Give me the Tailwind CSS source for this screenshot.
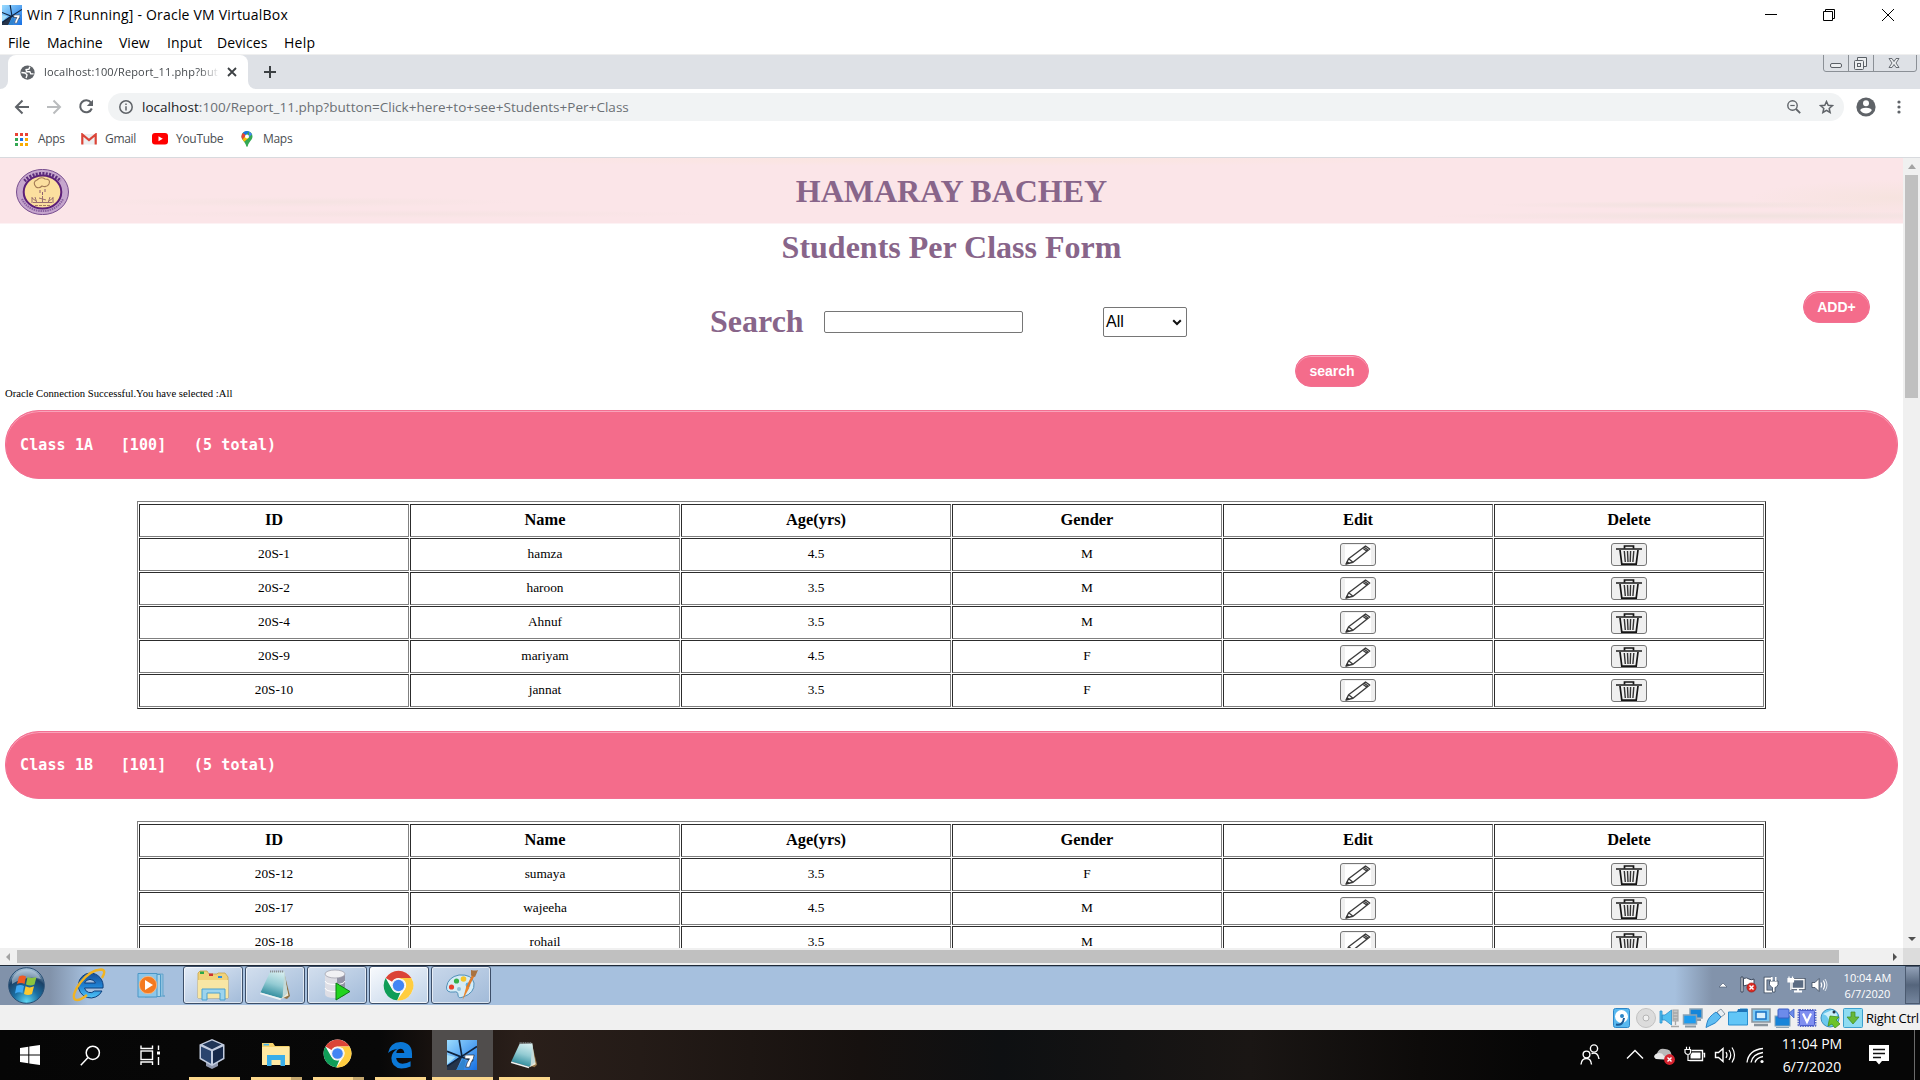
<!DOCTYPE html>
<html lang="en">
<head>
<meta charset="utf-8">
<title>Win 7 [Running] - Oracle VM VirtualBox</title>
<script src="https://cdn.jsdelivr.net/npm/@tailwindcss/browser@4"></script>
</head>
<body class="w-[1920px] h-[1080px] overflow-hidden bg-white flex flex-col font-['Open_Sans','Noto_Sans',sans-serif] text-black">

<!-- shared icon symbols -->
<svg class="absolute size-0">
  <defs>
    <linearGradient id="pad" x1=".6" y1="0" x2=".3" y2="1"><stop offset="0" stop-color="#d3ecee"/><stop offset=".45" stop-color="#93cbd3"/><stop offset=".85" stop-color="#3b93a3"/><stop offset="1" stop-color="#8fc4cc"/></linearGradient>
    <linearGradient id="glass" x1="0" y1="0" x2="1" y2="1"><stop offset="0" stop-color="#9bdcff"/><stop offset="1" stop-color="#1670e4"/></linearGradient>
  </defs>
  <symbol id="chrome" viewBox="0 0 48 48">
    <circle cx="24" cy="24" r="23" fill="#fff"/>
    <path d="M4.1 12.5 A23 23 0 0 1 43.9 12.5 H24 A11.5 11.5 0 0 0 14 18.3Z" fill="#db4437"/>
    <path d="M4.1 12.5 L14 29.7 A11.5 11.5 0 0 0 27 35 L22 47 A23 23 0 0 1 4.1 12.5Z" fill="#0f9d58"/>
    <path d="M43.9 12.5 A23 23 0 0 1 22 47 L34 29.7 A11.5 11.5 0 0 0 32 15 L24 12.5Z" fill="#ffcd40"/>
    <circle cx="24" cy="24" r="11" fill="#f1f1f1"/>
    <circle cx="24" cy="24" r="8.8" fill="#4285f4"/>
  </symbol>
  <symbol id="notepad" viewBox="0 0 32 32">
    <path d="M25 3 L31 27 L28 30 L22 28Z" fill="#8f7144"/>
    <path d="M24 3 L29.5 26.5 L22 30Z" fill="#efe9d6"/>
    <path d="M11 3 L25.5 2.5 L28 24 L22 29.500 L1.500 23.500Z" fill="url(#pad)"/>
    <path d="M25.500 2.500 L28.500 24 L23.500 29 Z" fill="#c3d9d8"/>
    <path d="M1.500 23.500 L22 29.300 L21.500 31.200 L1 25Z" fill="#eef3f4"/>
    <path d="M11 2.500 H25" stroke="#8b9294" stroke-width="2" stroke-dasharray="1.200 .8"/>
  </symbol>
  <symbol id="win7vm" viewBox="0 0 32 32">
    <rect width="32" height="32" fill="url(#glass)"/>
    <path d="M0 16 L9 18 L0 26Z" fill="#a4def9"/>
    <path d="M0 28 L13 18 L16 19 L10 32 H0Z" fill="#26344a"/>
    <path d="M10 32 L17 20 L20 22 L18 32Z" fill="#2f83cf"/>
    <path d="M13 0 L16 18 M32 7 L15 18 L0 28 M0 12 L15 18 L28 22" stroke="#10223c" stroke-width="1.800" fill="none"/>
    <path d="M19 16 H29 L28 20 Q25 24 24 29 H20 Q21 24 24 20 H19Z" fill="#fff" stroke="#28384e" stroke-width=".8"/>
  </symbol>
  <symbol id="pencil" viewBox="0 0 26 20" preserveAspectRatio="none">
    <rect x="0" y="0" width="26" height="20" fill="#fff"/>
    <path d="M1 19 L3.600 13.800 L20.500 1 L24.700 4 L8 17.200Z M3.600 13.800 L8 17.200 M17.800 3.200 L22 6.200 M19.200 2.200 L23.400 5.200" fill="none" stroke="#3c3c3c" stroke-width="1.400" stroke-linejoin="round"/>
    <path d="M.6 19.500 L2.200 16 L5 18.200Z" fill="#333"/>
  </symbol>
  <symbol id="trash" viewBox="0 0 26 20" preserveAspectRatio="none">
    <path d="M0 4 H26" stroke="#333" stroke-width="1.700"/>
    <path d="M8.500 3.500 V1 H17.500 V3.500 M4 5 L5.800 19.200 H20.200 L22 5" fill="none" stroke="#151515" stroke-width="1.700"/>
    <path d="M8.300 6 L9.300 17 M11.500 6 L12 17 M14.600 6 L14.200 17 M17.800 6 L16.900 17" stroke="#333" stroke-width="1.400"/>
  </symbol>
</svg>

<!-- host window title bar and menu -->
<div class="h-[29px] shrink-0 flex items-center pl-[2px] pr-[23px]">
  <svg class="size-5 shrink-0"><use href="#win7vm"/></svg>
  <span class="ml-[5px] text-[14px] tracking-[0.2px] whitespace-nowrap">Win 7 [Running] - Oracle VM VirtualBox</span>
  <svg class="ml-auto" width="132" height="14" fill="none" stroke="#000" stroke-width="1">
    <path d="M0 6.500 H12"/>
    <path d="M58.500 3.500 h9 v9 h-9z M60.500 3.500 V1.500 h9 v9 H67.500"/>
    <path d="M117 1 L129 13 M129 1 L117 13"/>
  </svg>
</div>
<div class="h-[25px] shrink-0 flex items-center gap-[16px] pl-[8px] pt-[2px] text-[14px] leading-5">
  <span class="w-[23px]">File</span><span class="w-[56px]">Machine</span><span class="w-[32px]">View</span><span class="w-[34px] tracking-[0.1px]">Input</span><span class="w-[51px] tracking-[0.1px]">Devices</span><span class="tracking-[0.3px]">Help</span>
</div>

<!-- browser tab strip -->
<div class="h-[35px] shrink-0 bg-[#dee1e6] border-t border-[#efefef] flex items-start">
  <div class="w-2 h-[34px] bg-white"><div class="size-full bg-[#dee1e6] rounded-br-lg"></div></div>
  <div class="w-[240px] h-[34px] bg-white rounded-t-lg flex items-center pl-[12px]">
    <svg class="size-[15px] shrink-0" viewBox="0 0 16 16"><circle cx="8" cy="8" r="7.600" fill="#5f6368"/><path d="M1.500 8 L5.500 8.500 L7.500 10.500 L6.500 14 M10.500 1.800 L9.500 4.500 L6.500 5 L7 7.200 H10.500 L11.500 9.500 L14.500 9.500" stroke="#fff" stroke-width="1.500" fill="none"/></svg>
    <span class="ml-[9px] w-[176px] whitespace-nowrap text-[11px] tracking-[0.15px] text-[#45494d] mask-r-from-88% mask-r-to-100%">localhost:100/Report_11.php?but</span>
    <svg class="ml-[7px]" width="10" height="10"><path d="M1 1 L9 9 M9 1 L1 9" stroke="#3c4043" stroke-width="1.800"/></svg>
  </div>
  <div class="w-2 h-[34px] bg-white"><div class="size-full bg-[#dee1e6] rounded-bl-lg"></div></div>
  <svg class="ml-[8px] mt-[11px]" width="12" height="12"><path d="M6 0 V12 M0 6 H12" stroke="#3c4043" stroke-width="2"/></svg>
  <svg class="ml-auto mr-[3px]" width="94" height="17" fill="none" stroke="#70757a">
    <path d="M.500 0 V14 Q.500 16.500 3 16.500 H91 Q93.500 16.500 93.500 14 V0 M25.500 0 V16 M50.500 0 V16" stroke="#8b9096"/>
    <rect x="7.500" y="8.500" width="11" height="4" rx="1.500" fill="#eceef0" stroke="#5b6066"/>
    <path d="M34.500 5 V2.500 H43.500 V11.500 H40" fill="#eceef0" stroke="#5b6066"/><rect x="31.500" y="5.500" width="9" height="9" rx="1" fill="#eceef0" stroke="#5b6066"/><rect x="34.500" y="8.500" width="3" height="3" stroke="#5b6066"/>
    <path d="M66 3.500 h3 l2 3 l2-3 h3 l-3 4.500 l3 4.500 h-3 l-2-3 l-2 3 h-3 l3-4.500z" fill="#eceef0" stroke="#5b6066" stroke-width=".9"/>
  </svg>
</div>

<!-- browser toolbar -->
<div class="h-[36px] shrink-0 flex items-center pl-[14px]">
  <svg width="16" height="16" fill="none" stroke="#5f6368" stroke-width="2"><path d="M15 8 H2 M8.500 1.500 L2 8 L8.500 14.500"/></svg>
  <svg class="ml-[16px]" width="16" height="16" fill="none" stroke="#babcbe" stroke-width="2"><path d="M1 8 H14 M7.500 1.500 L14 8 L7.500 14.500"/></svg>
  <svg class="ml-[16px]" width="16" height="16" viewBox="0 0 16 16"><path d="M13 3.600 A6 6 0 1 0 13.800 9.500" fill="none" stroke="#5f6368" stroke-width="2"/><path d="M15 .8 V7 H8.800Z" fill="#5f6368"/></svg>
  <div class="ml-[14px] w-[1736px] h-[28px] rounded-full bg-[#f1f3f4] flex items-center pl-[11px] pr-[10px]">
    <svg width="14" height="14" fill="none" stroke="#5f6368" stroke-width="1.500"><circle cx="7" cy="7" r="6.200"/><path d="M7 6.300 V10.500 M7 3.500 V5"/></svg>
    <span class="ml-[9px] text-[13.5px] tracking-[0.03px] whitespace-nowrap text-[#6b7075]"><span class="text-[#202124]">localhost</span>:100/Report_11.php?button=Click+here+to+see+Students+Per+Class</span>
    <svg class="ml-auto" width="14" height="14" fill="none" stroke="#5f6368" stroke-width="1.400"><circle cx="5.500" cy="5.500" r="4.700"/><path d="M9 9 L13.200 13.200" stroke-width="1.800"/><path d="M3.300 5.500 H7.700" stroke-width="1.200"/></svg>
    <svg class="ml-[18px]" width="15" height="14" viewBox="0 0 15 14"><path d="M7.500 1.500 L9.200 5.300 L13.300 5.700 L10.200 8.400 L11.100 12.500 L7.500 10.300 L3.900 12.500 L4.800 8.400 L1.700 5.700 L5.800 5.300Z" fill="none" stroke="#5f6368" stroke-width="1.500"/></svg>
  </div>
  <svg class="ml-[12px]" width="20" height="20" viewBox="0 0 20 20"><circle cx="10" cy="10" r="9.600" fill="#5f6368"/><circle cx="10" cy="6.300" r="3" fill="#fff"/><path d="M4.200 13.300 Q4.700 10.800 10 10.800 Q15.300 10.800 15.800 13.300 Q13.500 16.500 10 16.500 Q6.500 16.500 4.200 13.300Z" fill="#fff"/></svg>
  <svg class="ml-[21px]" width="4" height="14" fill="#5f6368"><circle cx="2" cy="2" r="1.600"/><circle cx="2" cy="7" r="1.600"/><circle cx="2" cy="12" r="1.600"/></svg>
</div>

<!-- bookmarks bar -->
<div class="h-[33px] shrink-0 border-b border-[#d8dade] flex items-center pl-[15px] pb-[4px] text-[12px] text-[#4a4e52]">
  <svg width="13" height="13"><path d="M0 0h3v3H0zM5 0h3v3H5zM10 0h3v3h-3z" fill="#ea4335"/><path d="M0 5h3v3H0zM0 10h3v3H0z" fill="#34a853"/><path d="M5 5h3v3H5z" fill="#1a73e8"/><path d="M10 5h3v3h-3zM10 10h3v3h-3zM5 10h3v3H5z" fill="#f9ab00"/></svg>
  <span class="ml-[10px] w-[27px] tracking-[-0.3px]">Apps</span>
  <svg class="ml-[16px]" width="16" height="12"><rect x="1" y="1" width="14" height="10.500" fill="#eceff1"/><path d="M1.300 11.500 V1.500 L8 7 L14.700 1.500 V11.500" fill="none" stroke="#db4437" stroke-width="2.200"/></svg>
  <span class="ml-[8px] w-[30px] tracking-[-0.3px]">Gmail</span>
  <svg class="ml-[17px]" width="16" height="12"><rect width="16" height="11.500" rx="3" fill="#f00"/><path d="M6.500 3.300 L10.800 5.750 L6.500 8.200Z" fill="#fff"/></svg>
  <span class="ml-[8px] w-[46px] tracking-[-0.3px]">YouTube</span>
  <svg class="ml-[19px]" width="12" height="16" viewBox="0 0 12 16"><path d="M6 0 A5.500 5.500 0 0 1 11.500 5.500 C11.500 9 7.500 11 6.700 15.200 Q6 16.500 5.300 15.200 C4.500 11 .5 9 .5 5.500 A5.500 5.500 0 0 1 6 0Z" fill="#34a853"/><path d="M6 0 A5.500 5.500 0 0 0 1.800 2 L4.500 4.300 L8 .4Z" fill="#1a73e8"/><path d="M1.800 2 A5.500 5.500 0 0 0 1.500 8.500 L5 4.300Z" fill="#ea4335"/><path d="M1.500 8.500 L3.200 10.700 L8 6.500 L5 4.500Z" fill="#fbbc04"/><path d="M8 .4 A5.500 5.500 0 0 1 11 3.300 L8 6Z" fill="#4285f4"/><circle cx="6" cy="5.400" r="2" fill="#fff"/></svg>
  <span class="ml-[10px] tracking-[-0.3px]">Maps</span>
</div>

<!-- page viewport -->
<div class="h-[790px] shrink-0 flex">
  <main class="w-[1903px] h-[790px] overflow-hidden bg-white font-['Liberation_Serif',serif]">
    <header class="h-[66px] border-b border-[#fdf2f4] bg-[#fbe5e8] bg-[radial-gradient(ellipse_220px_5px_at_300px_44px,#f5e3e2,transparent),radial-gradient(ellipse_300px_4px_at_420px_56px,#f6e3e3,transparent),radial-gradient(ellipse_200px_4px_at_1690px_47px,#f1e2df,transparent),radial-gradient(ellipse_330px_5px_at_1760px_58px,#f1e2df,transparent),radial-gradient(ellipse_140px_18px_at_1890px_40px,#f6e3df,transparent),radial-gradient(ellipse_500px_6px_at_960px_2px,#fae5df,transparent)] grid grid-cols-[1fr_auto_1fr] items-center">
      <svg class="ml-[16px] mt-[3px]" width="53" height="46" viewBox="0 0 53 46">
        <ellipse cx="26.500" cy="23" rx="26" ry="22.600" fill="#c6a6cd" stroke="#6b3f86" stroke-width=".9"/>
        <ellipse cx="26.500" cy="23" rx="18.800" ry="16.600" fill="#fbdf9f" stroke="#5c1f78" stroke-width="2"/>
        <path d="M8.500 12 A23 19.500 0 0 1 44.500 12" fill="none" stroke="#5c2c7c" stroke-width="3.400" stroke-dasharray="2 1.300"/>
        <path d="M6 30 A22 19 0 0 0 47 30" fill="none" stroke="#8a62a0" stroke-width="2" stroke-dasharray="1.500 .8"/>
        <path d="M20 18 Q16 13 21 11 Q25 7 29 10 Q35 10 33 15 Q31 19 26 17 Q23 20 20 18Z" fill="none" stroke="#a37a55" stroke-width="1.100"/>
        <path d="M24 21 V24 M29 20 V23 M26.500 23 V26" stroke="#8d5f70" stroke-width="1"/>
        <path d="M16 34 V28 M21 34 L19 28 M26.500 34 V27 M32 34 L34 28 M37 34 V28 M17 33.500 H36 M16 29 L20 32 M37 29 L33 32 M23 29 L30 31" stroke="#9a6f70" stroke-width="1" fill="none"/>
        <path d="M19 36.500 H34" stroke="#a57c62" stroke-width="1" stroke-dasharray="3 1"/>
      </svg>
      <h1 class="mt-px text-[32px] leading-9 font-bold text-[#88658a] whitespace-nowrap">HAMARAY BACHEY</h1>
    </header>
    <h2 class="mt-[5px] text-center text-[32px] leading-9 font-bold text-[#88658a]">Students Per Class Form</h2>
    <div class="mt-[26px] h-[64px] flex items-start pl-[710px] font-['Liberation_Sans',sans-serif]">
      <label class="mt-3 w-[114px] font-['Liberation_Serif',serif] text-[32px] leading-9 font-bold text-[#88658a]">Search</label>
      <input type="text" class="mt-[20px] w-[199px] h-[22px] border border-[#767676] rounded-[2px] bg-white">
      <div class="ml-[80px] mt-[16px] w-[84px] h-[30px] border border-[#767676] rounded-[2px] flex items-center justify-between pl-[2px] pr-[4px] text-[16px]">
        <span>All</span>
        <svg width="10" height="7"><path d="M1.200 1.200 L5 5 L8.800 1.200" fill="none" stroke="#111" stroke-width="2"/></svg>
      </div>
      <button class="ml-auto mr-[33px] w-[67px] h-[32px] rounded-[16px] border border-[#f27092] bg-[#f46c8b] shadow-[inset_0_1px_0_#f9a3ba] text-white text-[14px] font-bold leading-4">ADD+</button>
    </div>
    <div class="pl-[1295px] h-[32px] flex font-['Liberation_Sans',sans-serif]">
      <button class="w-[74px] h-[32px] rounded-[16px] border border-[#f27092] bg-[#f46c8b] shadow-[inset_0_1px_0_#f9a3ba] text-white text-[14px] font-bold leading-4">search</button>
    </div>
    <p class="pl-[5px] text-[10.67px] leading-3">Oracle Connection Successful.You have selected :All</p>
    <div id="classes" class="mt-[11px] flex flex-col gap-[22px]"></div>
  </main>
  <div class="w-[17px] bg-[#f0f0f0] flex flex-col items-center">
    <svg class="mt-[6px]" width="8" height="5"><path d="M0 5 L4 0 L8 5Z" fill="#a3a3a3"/></svg>
    <div class="mt-[6px] w-[13px] h-[223px] bg-[#c0c0c0]"></div>
    <svg class="mt-auto mb-[7px]" width="8" height="4"><path d="M0 0 L4 4 L8 0Z" fill="#505050"/></svg>
  </div>
</div>
<div class="h-[17px] shrink-0 bg-[#f0f0f0] flex items-center">
  <svg class="ml-[6px]" width="4" height="8"><path d="M4 0 L0 4 L4 8Z" fill="#a3a3a3"/></svg>
  <div class="ml-[7px] w-[1822px] h-[13px] bg-[#c0c0c0]"></div>
  <svg class="ml-[54px]" width="4" height="8"><path d="M0 0 L4 4 L0 8Z" fill="#505050"/></svg>
  <div class="ml-auto w-[17px] h-[17px] bg-[#dcdcdc]"></div>
</div>

<!-- guest taskbar -->
<div class="h-[40px] shrink-0 border-t border-[#1f2a38] shadow-[inset_0_1px_0_#7f97b3] bg-[linear-gradient(90deg,#8192aa_0,#8192aa_50px,#a6c0de_88px,#a6c0de_1675px,#8293ab_1712px,#8293ab_1920px)] flex items-center pb-px">
  <svg class="ml-[8px]" width="37" height="37" viewBox="0 0 37 37">
    <defs><radialGradient id="orb" cx=".5" cy=".95" r=".9"><stop offset="0" stop-color="#5fd6f2"/><stop offset=".4" stop-color="#1b6fa3"/><stop offset=".75" stop-color="#1b4166"/><stop offset="1" stop-color="#9db8cf"/></radialGradient></defs>
    <circle cx="18.500" cy="18.500" r="17.800" fill="url(#orb)" stroke="#274e74" stroke-width="1"/>
    <path d="M4 12 A16 16 0 0 1 33 12 Q18 8 4 17Z" fill="#c5d6e6" opacity=".55"/>
    <path d="M11 9.500 Q14.500 7.500 18 9.500 L16.500 17 Q13 15 9 17Z" fill="#ee5a24"/>
    <path d="M19.500 10 Q23 12 28.500 10 L26.500 17.500 Q22.500 19.500 18 17.500Z" fill="#8bc53f"/>
    <path d="M8.500 18.800 Q12.500 17 16 19 L14.500 26 Q11 24.500 7 26.500Z" fill="#3fa9f5"/>
    <path d="M17.500 19.300 Q21.500 21.500 26 19.300 L24 27 Q20 29 16 27Z" fill="#fdc82f"/>
  </svg>
  <svg class="ml-[27px]" width="34" height="34" viewBox="0 0 34 34">
    <defs><linearGradient id="ie" x1="0" y1="0" x2="0" y2="1"><stop offset="0" stop-color="#1a4f96"/><stop offset=".5" stop-color="#1f7fd0"/><stop offset="1" stop-color="#4fc3f7"/></linearGradient></defs>
    <path d="M18 5 A12.500 12.500 0 1 0 30 23 H22.500 A6 6 0 0 1 12.500 20 H31 A13 13 0 0 0 18 5Z M12.500 15 A6 6 0 0 1 23.500 15Z" fill="url(#ie)" fill-rule="evenodd" stroke="#0d3f7c" stroke-width="1"/>
    <path d="M30 10 Q35 2 29 1.500 Q18 2 8 15 Q-1 28 3 31.500 Q7 33.500 15 27" fill="none" stroke="#f0b323" stroke-width="2.400"/>
  </svg>
  <svg class="ml-[31px]" width="30" height="30" viewBox="0 0 30 30">
    <path d="M8 4 H26 V26 H28 L8 27Z" fill="#8fc2e0" stroke="#5a9fc8" stroke-width=".8"/>
    <path d="M4 4.500 H23.500 V26.500 H4Z" fill="#a9d5ec" stroke="#4f9bc8"/><path d="M1 3.500 H20 V27 H1Z" fill="#8dc6e8" stroke="#4b97c6"/>
    <circle cx="11" cy="15" r="8.700" fill="#f47a20" stroke="#fbc08c" stroke-width=".8"/><path d="M8 10 L16 15 L8 20Z" fill="#fff"/>
  </svg>
  <div class="ml-[16px] flex gap-[2px]">
    <div class="w-[60px] h-[38px] rounded-[3px] border border-[#3d4f69] bg-linear-to-br from-[#e3ebf6] to-[#a2bbd9] inset-ring inset-ring-white/60 grid place-items-center">
      <svg width="34" height="32" viewBox="0 0 34 32"><path d="M2 4 L4 2 H11 L13 5 H21 L22 4 H29 L32 8 V29 H2Z" fill="#f0d27a" stroke="#c9a44a" stroke-width=".8"/><path d="M4 2.500 H8 V5 H4Z" fill="#2aa84a"/><path d="M13 4.500 H17 V7 H13Z" fill="#c33"/><path d="M22 7 H26 V9 H22Z" fill="#2e8fe0"/><path d="M2 11 H32 V29 H2Z" fill="#f8e6a4"/><path d="M6 31 V20 H29 V31 H24 V24 H11 V31Z" fill="#9cd4ee" stroke="#4ba0cf" stroke-width="1"/></svg>
    </div>
    <div class="w-[60px] h-[38px] rounded-[3px] border border-[#3d4f69] bg-linear-to-br from-[#d3dfee] to-[#a2bbd9] inset-ring inset-ring-white/60 grid place-items-center">
      <svg class="size-[32px]"><use href="#notepad"/></svg>
    </div>
    <div class="w-[60px] h-[38px] rounded-[3px] border border-[#3d4f69] bg-linear-to-br from-[#d3dfee] to-[#a2bbd9] inset-ring inset-ring-white/60 grid place-items-center">
      <svg width="30" height="32" viewBox="0 0 30 32"><path d="M3 5 V25 Q3 29 13 29 Q23 29 23 25 V5Z" fill="#dedee5"/><path d="M15 5 H23 V26 Q22 28 15 28.800Z" fill="#9494a6"/><ellipse cx="13" cy="5" rx="10" ry="4" fill="#f1f1f4" stroke="#9c9ca8" stroke-width=".7"/><path d="M3 12 Q4 15.500 13 15.500 Q22 15.500 23 12 M3 19 Q4 22.500 13 22.500 Q22 22.500 23 19" fill="none" stroke="#fff" stroke-width="1"/><path d="M14 14 L28 22.500 L14 31Z" fill="#22d41e" stroke="#0b7a14" stroke-width="1"/></svg>
    </div>
    <div class="w-[60px] h-[38px] rounded-[3px] border border-[#3d4f69] bg-linear-to-br from-[#f8fafd] to-[#bfd2e8] inset-ring inset-ring-white/80 grid place-items-center">
      <svg class="mr-px size-[31px]"><use href="#chrome"/></svg>
    </div>
    <div class="w-[60px] h-[38px] rounded-[3px] border border-[#3d4f69] bg-linear-to-br from-[#c8d7ea] to-[#a2bbd9] inset-ring inset-ring-white/60 grid place-items-center">
      <svg width="33" height="32" viewBox="0 0 33 32"><path d="M14 6 Q27 5 29 14 Q30 24 18 28 Q13 30 13 26 Q13 22 9 23 Q1 24 1.500 18 Q3 8 14 6Z" fill="#d6ecf6" stroke="#4f8fb8" stroke-width="1"/><circle cx="6.500" cy="18" r="2.600" fill="#e8402c"/><circle cx="11.500" cy="12" r="2.600" fill="#35b04a"/><circle cx="18.500" cy="10" r="2.800" fill="#f4c52b"/><circle cx="14" cy="20" r="2" fill="#8fbfd8"/><circle cx="23" cy="16" r="2.400" fill="#53b4e8"/><path d="M29 5 L22 19" stroke="#e07b2a" stroke-width="2.600"/><path d="M21.500 17 L24.500 18.500 L17.500 31Z" fill="#e8862e"/><path d="M26 1 Q30 2 33 1 L30 8 L26 6.500Z" fill="#a97240"/></svg>
    </div>
  </div>
  <svg class="ml-auto" width="110" height="20" viewBox="0 0 110 20">
    <path d="M1 12 L5 8 L9 12Z" fill="#fff" stroke="#40506a" stroke-width=".6"/>
    <g stroke="#3a465a" stroke-width="1"><path d="M23 2 H25 V17 H23Z" fill="#fff"/><path d="M25.500 3.500 Q29 2 31 4 Q33 5.500 36 4 V11 Q33 12.500 31 10.500 Q29 9.500 25.500 11Z" fill="#fff"/></g>
    <circle cx="33.500" cy="12.500" r="4.600" fill="#dd2a22" stroke="#8e1510" stroke-width=".6"/><path d="M31.500 10.500 L35.500 14.500 M35.500 10.500 L31.500 14.500" stroke="#fff" stroke-width="1.500"/>
    <path d="M54 3.500 H47.500 V16.500 H54" fill="none" stroke="#39465a" stroke-width="3.600"/><path d="M54.500 3.500 H47.500 V16.500 H54" fill="none" stroke="#fff" stroke-width="2"/><path d="M51.500 6 H60 V9.500 Q59 12.500 57 12.500 V17 H54.500 V12.500 Q52.500 12 51.500 9.500Z M53.500 2.500 V6 M58 2.500 V6" fill="#fff" stroke="#39465a" stroke-width=".8"/><path d="M53.700 2 V6 M57.800 2 V6" stroke="#fff" stroke-width="1.500"/>
    <path d="M74 4.500 H86 V13.500 H74Z" fill="#5b6b82" stroke="#39465a" stroke-width="3"/><path d="M74 4.500 H86 V13.500 H74Z" fill="#5b6b82" stroke="#fff" stroke-width="1.400"/><path d="M76 16.500 H84 M80 14 V16" stroke="#fff" stroke-width="1.800"/><path d="M70 3.500 H75.500 V7 H70Z M72.800 7 V15 M71 1.500 V3 M74.500 1.500 V3" fill="#fff" stroke="#fff" stroke-width="1.200"/>
    <path d="M94 7.500 H97 L101 3.500 V16.500 L97 12.500 H94Z" fill="#fff" stroke="#39465a" stroke-width=".8"/><path d="M103 7.500 Q104.500 10 103 12.500 M105.300 5.500 Q108 10 105.300 14.500" stroke="#fff" stroke-width="1.200" fill="none"/><path d="M107 4 Q111 10 107 16" stroke="#dfe6ee" stroke-width="1" fill="none"/>
  </svg>
  <div class="ml-[14px] w-[51px] pt-px text-center text-[11px] leading-[16px] text-white whitespace-nowrap">10:04 AM<br>6/7/2020</div>
  <div class="ml-[12px] w-[15px] h-[38px] border border-[#4b5a70] bg-linear-to-b from-[#93a2b8] via-[#55657c] to-[#75869e]"></div>
</div>

<!-- VirtualBox status bar -->
<div class="h-[25px] shrink-0 bg-[#f0f0f0] flex items-center justify-end gap-[3px] text-[13px] leading-5">
  <svg width="250" height="20" viewBox="0 0 250 20" class="shrink-0">
    <rect x=".5" y=".5" width="16" height="19" rx="2" fill="#59b9f0" stroke="#2c86c8"/><circle cx="8.500" cy="8.500" r="6.500" fill="#fff"/><circle cx="9" cy="8" r="2" fill="#2c86c8"/><path d="M11 10 Q10 18 3 16.500" stroke="#1b5b98" stroke-width="2" fill="none"/>
    <circle cx="33" cy="10" r="9.500" fill="#dcdcdc" stroke="#c2c2c2"/><circle cx="33" cy="10" r="3" fill="#f0f0f0" stroke="#b5b5b5"/>
    <path d="M47 3 H49 V15 H47Z M49 7 H52 L58.500 2 V17 L52 12 H49Z" fill="#52c0f1" stroke="#2c8fcb" stroke-width=".8"/><path d="M60 2 H65 V13 H60Z" fill="#c6c6c6" stroke="#a8a8a8" stroke-width="1.200"/><path d="M60 5 H65 M60 8 H65 M60 11 H65 M62.500 13 V17 M58 18.500 H66" stroke="#a8a8a8" stroke-width="1.300"/>
    <rect x="77" y="1" width="12" height="9" fill="#1585d8" stroke="#8ca3b4" stroke-width="1.500"/><path d="M81 12 H88" stroke="#8c9aa5" stroke-width="2"/><rect x="70.500" y="7" width="13" height="9" fill="#1d9cf0" stroke="#8ca3b4" stroke-width="1.500"/><path d="M72 18.500 H83" stroke="#8c9aa5" stroke-width="2"/>
    <path d="M104 4 L108 1 L112 6 L108 9Z" fill="#e8eef3" stroke="#8796a3"/><path d="M94 15 Q95 9 103 4 L108 9 Q103 16 97 17.500 L93 19.500Z" fill="#5fbdf2" stroke="#2c86c8"/>
    <path d="M115.500 4 H124 L127 1 H134.500 V17 H115.500Z" fill="#62c6f7" stroke="#2b8ecd"/><path d="M125 1 H134 V4 H124Z" fill="#1e74b8"/>
    <rect x="139" y="1" width="18" height="13" fill="#7cc9f4" stroke="#8a949c" stroke-width="1.500"/><rect x="143" y="4" width="10" height="7" fill="#d8f0fd" stroke="#1470c4" stroke-width="1.500"/><path d="M141 17 H155" stroke="#8a949c" stroke-width="2.500"/>
    <rect x="162" y="8" width="15" height="10" fill="#1784d9" stroke="#8ca3b4"/><path d="M163 19.500 H176" stroke="#8ca3b4"/><rect x="165" y="1" width="11" height="9" rx="1" fill="#6c8bea" stroke="#3b5fc4"/><path d="M176 5 L181 1 V10Z" fill="#6c8bea" stroke="#3b5fc4" stroke-width=".8"/>
    <rect x="185.500" y="2" width="17" height="16" rx="1" fill="none" stroke="#5568c8" stroke-width="2" stroke-dasharray="1.500 1"/><rect x="186.500" y="2.500" width="15" height="15" rx="1" fill="#7f8ff0" stroke="#4a5ccc"/><path d="M190 5.500 L194 14 L198 5.500" fill="none" stroke="#fff" stroke-width="2.200"/>
    <circle cx="217" cy="10" r="9" fill="#6cc9ee" stroke="#3b8fc0"/><path d="M210 6 Q216 8 216 14 Q218 16 223 14 L224 6 L219 2Z" fill="#c9eefb"/><path d="M217 8 L226 9 L223 12 L227 16 L222 20 L219 16 L215 18Z" fill="#6cc32b" stroke="#3e8a14" stroke-width=".7"/><circle cx="221" cy="4" r="1.500" fill="#234"/>
    <rect x="230.500" y=".5" width="19" height="19" rx="1" fill="#8fdcf2" stroke="#3d9fcd"/><path d="M238 4 H242 V9 H246 L240 16 L234 9 H238Z" fill="#67b83a" stroke="#3f8a1c" stroke-width=".7"/>
  </svg>
  <span class="w-[54px] whitespace-nowrap tracking-[-0.3px]">Right Ctrl</span>
</div>

<!-- host taskbar -->
<div class="h-[50px] shrink-0 bg-[linear-gradient(90deg,#060606_0,#080808_380px,#1a1310_440px,#2a1f1a_520px,#241b17_640px,#16110f_860px,#0e1012_1000px,#1a1614_1250px,#0d0b0a_1420px,#060606_1540px)] flex items-center text-white">
  <svg class="ml-[20px]" width="20" height="20"><path d="M0 3 L8.300 1.800 V9.500 H0Z M9.300 1.600 L20 0 V9.500 H9.300Z M0 10.500 H8.300 V18.300 L0 17.100Z M9.300 10.500 H20 V20 L9.300 18.500Z" fill="#fff"/></svg>
  <svg class="ml-[40px]" width="21" height="21" fill="none" stroke="#fff" stroke-width="1.500"><circle cx="12.800" cy="7.800" r="6.600"/><path d="M8 12.600 L.8 20.200"/></svg>
  <svg class="ml-[39px]" width="21" height="21" fill="none" stroke="#fff" stroke-width="1.400"><path d="M1 .5 V3.500 H12.500 V.5 M1 20 V17 H12.500 V20"/><rect x="1" y="6" width="11.500" height="8.500"/><path d="M18.500 .5 V5 M18.500 12 V20"/><rect x="17" y="6.500" width="3" height="3" fill="#fff" stroke="none"/></svg>
  <div class="ml-[28px] flex h-[50px]">
    <div class="w-[51px] h-full grid grid-rows-[47px_3px] place-items-center">
      <svg class="mr-[5px]" width="26" height="30" viewBox="0 0 26 30"><path d="M7 21 H19 V27 L13 30 L7 27Z" fill="#8f97ad"/><path d="M13 0 L25.500 5.500 V20 L13 27 L.5 20 V5.500Z" fill="#c3cde0"/><path d="M13 1.500 L22.500 5.500 L13 10.200 L3.500 5.500Z" fill="#1f3557"/><path d="M2 7.500 L12 12 V24.800 L2 19Z" fill="#2a456f"/><path d="M24 7.500 L14 12 V24.800 L24 19Z" fill="#16294a"/></svg>
      <div class="w-full h-[3px] bg-[#fbd78c]"></div>
    </div>
    <div class="ml-[11px] w-[51px] h-full grid grid-rows-[47px_3px] place-items-center">
      <svg class="mr-[2px]" width="28" height="24" viewBox="0 0 28 24"><path d="M0 1 H11 L13 4 H27.500 V23 H0Z" fill="#f7d36b"/><path d="M1.500 1.800 H7 V3.500 H1.500Z" fill="#49b8f0"/><path d="M0 5 H27.500 V23 H0Z" fill="#ffe9a2"/><path d="M5 24 V13 H23 V24 H18.500 V18 H9.500 V24Z" fill="#39aee9"/></svg>
      <div class="w-full h-[3px] flex bg-[#c4a76e]"><div class="w-[40px] bg-[#fbd78c]"></div></div>
    </div>
    <div class="ml-[11px] w-[51px] h-full grid grid-rows-[47px_3px] place-items-center">
      <svg class="mr-[2px] size-[29px]"><use href="#chrome"/></svg>
      <div class="w-full h-[3px] flex bg-[#c4a76e]"><div class="w-[40px] bg-[#fbd78c]"></div></div>
    </div>
    <div class="ml-[11px] w-[51px] h-full grid grid-rows-[47px_3px] place-items-center">
      <svg class="mt-[3px]" width="25" height="28" viewBox="0 0 26 28"><path d="M0 12 Q2 1 13 .5 Q25 1 25 13 V17 H8.500 Q9 22.500 15 23 Q20 23 23.500 20.500 V26 Q19 28 14 28 Q3.500 27 3.500 17 Q4 11 9.500 8 Q4 8 0 12Z M8.700 12 H17 Q16.500 7.500 12.800 7.500 Q9 8 8.700 12Z" fill="#0b78d7" fill-rule="evenodd"/></svg>
      <div class="w-full h-[3px] bg-[#fbd78c]"></div>
    </div>
    <div class="ml-[6px] w-[61px] h-full bg-[#504d4c] grid grid-rows-[47px_3px] place-items-center">
      <svg class="mt-[3px] mr-px size-[30px]"><use href="#win7vm"/></svg>
      <div class="w-full h-[3px] bg-[#fbd78c]"></div>
    </div>
    <div class="ml-[6px] w-[51px] h-full grid grid-rows-[47px_3px] place-items-center">
      <svg class="mt-[2px] mr-[2px] size-[28px]"><use href="#notepad"/></svg>
      <div class="w-full h-[3px] bg-[#fbd78c]"></div>
    </div>
  </div>
  <svg class="ml-auto" width="186" height="22" viewBox="0 0 186 22" fill="none" stroke="#fff" stroke-width="1.400">
    <circle cx="14" cy="4.500" r="3.600"/><circle cx="6.500" cy="10.500" r="3.400"/><path d="M1 20.500 Q1.500 14.500 6.500 14.500 Q11 14.500 11.500 20.500 M11.500 9.500 Q18 7.500 19 15"/>
    <path d="M47 14.500 L55 6.500 L63 14.500"/>
    <path d="M76 15 Q72 12 77 9.500 Q79 3.500 85 5 Q91 5 91.500 11 Q93 15 88 15.500Z" fill="#b9b9b9" stroke="none"/><path d="M76 15 Q72 12 77 9.500 Q82 8 84 12 L88 15.500Z" fill="#e8e8e8" stroke="none"/>
    <circle cx="89.500" cy="15.500" r="5.400" fill="#d6232f" stroke="none"/><path d="M87.500 13.500 L91.500 17.500 M91.500 13.500 L87.500 17.500"/>
    <path d="M111.500 6.500 H122.500 V16.500 H109.500 M123.500 9.500 H124.500 V13.500"/><path d="M112 8.500 H120.500 V14.500 H110.500 V11Z" fill="#fff" stroke="none"/><path d="M105 5.500 H110.500 V8.500 Q110 10.500 108 10.500 Q106 10.500 105 8.500Z M106.500 2.800 V5 M109.500 2.800 V5 M108 10.500 V16.500 H110" stroke-width="1.200"/>
    <path d="M135.500 8.500 H138.500 L143 4.500 V17.500 L138.500 13.500 H135.500Z"/><path d="M146 8 Q148 11 146 14 M149 6 Q152.500 11 149 16 M152 3.500 Q157 11 152 18.500" stroke-width="1.200"/>
    <path d="M167 18.500 Q168.500 6 183 4.500 M171 18.500 Q172.500 10 183 8.500 M175 18.500 Q176 14 183 12.500" stroke-width="1.300"/><circle cx="182" cy="17.500" r="1.600" fill="#fff" stroke="none"/>
  </svg>
  <div class="ml-[15px] w-[62px] text-center text-[14px] leading-[23px] whitespace-nowrap">11:04 PM<br>6/7/2020</div>
  <svg class="ml-[26px]" width="20" height="20"><path d="M0 0 H20 V16 H13 L10 19.500 L7 16 H0Z" fill="#fff"/><path d="M4 4.500 H16 M4 8.500 H16 M4 12.500 H12" stroke="#111" stroke-width="1.300"/></svg>
  <div class="ml-[25px] mr-[5px] w-px h-full bg-[#6a6a6a]"></div>
</div>

<script>
const groups = [
  { label: "Class 1A   [100]   (5 total)", height: 69, rows: [
    ["20S-1","hamza","4.5","M"],["20S-2","haroon","3.5","M"],["20S-4","Ahnuf","3.5","M"],["20S-9","mariyam","4.5","F"],["20S-10","jannat","3.5","F"]] },
  { label: "Class 1B   [101]   (5 total)", height: 68, rows: [
    ["20S-12","sumaya","3.5","F"],["20S-17","wajeeha","4.5","M"],["20S-18","rohail","3.5","M"]] }
];
const cell = "h-[33px] p-0 border border-t-[#2c2c2c] border-l-[#2c2c2c] border-r-[#808080] border-b-[#808080] text-center align-middle";
const iconButton = id => `<td class="${cell}"><button class="mx-auto w-[36px] h-[23px] border border-[#767676] rounded-[3px] bg-[#efefef] flex items-center justify-center"><svg width="26" height="20"><use href="#${id}"/></svg></button></td>`;
document.getElementById("classes").innerHTML = groups.map(g => `
  <div class="ml-[5px] w-[1893px] shrink-0 rounded-[34px] border border-[#f27092] bg-[#f46c8b] shadow-[inset_0_1px_0_#f9a3ba] flex items-center pl-[14px] pt-px whitespace-pre text-white font-bold text-[15px] tracking-[0.12px] font-['DejaVu_Sans_Mono',monospace]" style="height:${g.height}px">${g.label}</div>
  <table class="ml-[137px] w-[1629px] shrink-0 table-fixed border-separate border-spacing-px pt-px border border-t-[#808080] border-l-[#808080] border-r-[#2c2c2c] border-b-[#2c2c2c]">
    <tr class="text-[16.4px] leading-5">${["ID","Name","Age(yrs)","Gender","Edit","Delete"].map(h => `<th class="${cell} pb-[2px]">${h}</th>`).join("")}</tr>
    ${g.rows.map(r => `<tr class="text-[13.33px] leading-4">${r.map(c => `<td class="${cell} pb-[2px]">${c}</td>`).join("")}${iconButton("pencil")}${iconButton("trash")}</tr>`).join("")}
  </table>`).join("");
</script>
</body>
</html>
